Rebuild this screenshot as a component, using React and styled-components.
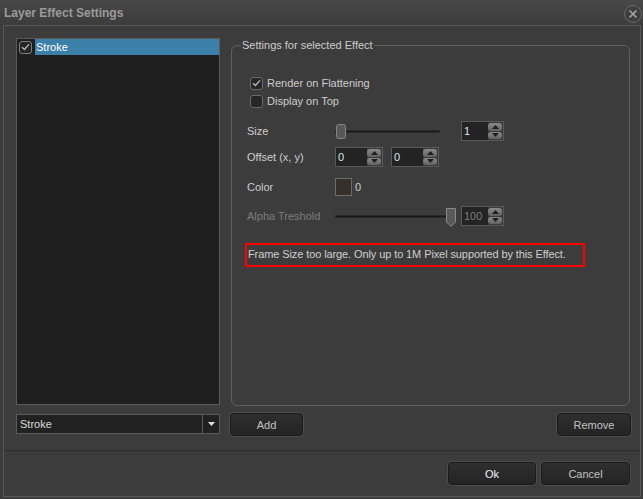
import React from "react";
import styled, { createGlobalStyle } from "styled-components";

const GlobalStyle = createGlobalStyle`
  html, body {
    margin: 0;
    padding: 0;
    background: #3c3c3c;
  }
  body {
    font-family: "Liberation Sans", Arial, sans-serif;
    font-size: 11px;
  }
`;

const Window = styled.div`
  width: 643px;
  height: 499px;
  display: flex;
  flex-direction: column;
  background: #3c3c3c;
  color: #cdcdcd;
  overflow: hidden;
`;

const TitleBar = styled.div`
  height: 25px;
  flex: none;
  display: flex;
  align-items: center;
  justify-content: space-between;
  padding-left: 4px;
  background: linear-gradient(#484848, #3c3c3c);
`;

const Title = styled.div`
  font-weight: bold;
  font-size: 12px;
  color: #9a9a9a;
`;

const CloseButton = styled.div`
  width: 16px;
  height: 16px;
  margin-right: 1px;
  margin-top: 3px;
  border-radius: 50%;
  border: 1px solid #6a6a6a;
  background: #3e3e3e;
  display: flex;
  align-items: center;
  justify-content: center;
`;

const Frame = styled.div`
  flex: 1;
  display: flex;
  flex-direction: column;
  margin: 0 2px 2px 3px;
  border: 1px solid #575757;
`;

const Body = styled.div`
  height: 398px;
  flex: none;
  display: flex;
  gap: 10px;
  padding: 12px 9px 14px 12px;
  border-bottom: 1px solid #2c2c2c;
`;

const LeftColumn = styled.div`
  width: 204px;
  display: flex;
  flex-direction: column;
  gap: 9px;
  padding-bottom: 2px;
`;

const EffectList = styled.div`
  flex: 1;
  background: #1f1f1f;
  border: 1px solid #5a5a5a;
`;

const ListItem = styled.div`
  height: 16px;
  display: flex;
  align-items: center;
  gap: 3px;
  padding-left: 2px;
`;

const ItemLabel = styled.div`
  flex: 1;
  height: 16px;
  line-height: 16px;
  padding-left: 1px;
  background: ${(p) => (p.$selected ? "#3a80a9" : "transparent")};
  color: ${(p) => (p.$selected ? "#ffffff" : "#d2d2d2")};
`;

const CheckBox = styled.div`
  width: 11px;
  height: 11px;
  flex: none;
  border: 1px solid ${(p) => p.$border || "#6a6a6a"};
  border-radius: 3px;
  background: #262626;
  display: flex;
  align-items: center;
  justify-content: center;
`;

const Combo = styled.div`
  height: 18px;
  display: flex;
  background: #212121;
  border: 1px solid #5a5a5a;
`;

const ComboText = styled.div`
  flex: 1;
  line-height: 18px;
  padding-left: 3px;
  color: #dcdcdc;
`;

const ComboArrow = styled.div`
  width: 16px;
  border-left: 1px solid #5a5a5a;
  display: flex;
  align-items: center;
  justify-content: center;
`;

const RightColumn = styled.div`
  flex: 1;
  display: flex;
  flex-direction: column;
`;

const GroupBox = styled.fieldset`
  flex: 1;
  min-width: 0;
  margin: 0 1px;
  padding: 22px 0 0 15px;
  border: 1px solid #5e5e5e;
  border-radius: 6px;
  display: flex;
  flex-direction: column;
`;

const GroupTitle = styled.legend`
  margin-left: -6px;
  padding: 0 1px;
  color: #cdcdcd;
  font-size: 11px;
  line-height: 14px;
`;

const CheckRow = styled.div`
  height: 18px;
  display: flex;
  align-items: center;
  gap: 4px;
  padding-left: 3px;
`;

const FieldRow = styled.div`
  height: 20px;
  display: flex;
  align-items: center;
  margin-top: ${(p) => p.$top}px;
`;

const FieldLabel = styled.div`
  width: 88px;
  flex: none;
  color: ${(p) => (p.$disabled ? "#7c7c7c" : "#cdcdcd")};
`;

const SliderTrack = styled.div`
  position: relative;
  width: ${(p) => p.$width}px;
  height: 3px;
  margin-right: ${(p) => p.$gap}px;
  background: #1a1a1a;
  border: 1px solid #2a2a2a;
  box-sizing: border-box;
`;

const SliderThumb = styled.div`
  position: absolute;
  top: ${(p) => p.$top}px;
  width: 10px;
  display: flex;
`;

const Spin = styled.div`
  width: ${(p) => p.$width}px;
  height: 20px;
  box-sizing: border-box;
  display: flex;
  border: 1px solid #5a5a5a;
  background: #232323;
  margin-right: ${(p) => p.$gap || 0}px;
`;

const SpinValue = styled.div`
  flex: 1;
  line-height: 18px;
  padding-left: 2px;
  color: ${(p) => (p.$disabled ? "#7c7c7c" : "#dde3ea")};
`;

const SpinButtons = styled.div`
  width: 14px;
  display: flex;
  flex-direction: column;
  justify-content: center;
  gap: 1px;
  padding: 1px 1px 1px 0;
  background: #3a3a3a;
`;

const SpinArrow = styled.div`
  flex: 1;
  border-radius: 3px;
  background: linear-gradient(#8a8a8a, #626262);
  display: flex;
  align-items: center;
  justify-content: center;
`;

const Swatch = styled.div`
  width: 15px;
  height: 16px;
  border: 1px solid #6c6c6c;
  background: #342f29;
  margin-right: 3px;
`;

const Message = styled.div`
  width: 335px;
  height: 20px;
  margin: 17px 0 0 -2px;
  padding-left: 1px;
  border: 2px solid #ff0000;
  line-height: 19px;
  letter-spacing: -0.1px;
  color: #cfcfcf;
`;

const ButtonRow = styled.div`
  display: flex;
  justify-content: space-between;
  margin-top: ${(p) => p.$top || 0}px;
`;

const Button = styled.button`
  width: ${(p) => p.$width}px;
  height: 23px;
  padding: 0;
  border-radius: 4px;
  border: 1px solid #1b1b1b;
  box-shadow: 0 0 0 1px #4c4c4c;
  background: linear-gradient(#2e2e2e, #252525);
  color: ${(p) => (p.$primary ? "#f4f4f4" : "#c2c2c2")};
  font-family: "Liberation Sans", Arial, sans-serif;
  font-size: 11px;
`;

const Footer = styled.div`
  flex: 1;
  display: flex;
  justify-content: flex-end;
  align-items: flex-start;
  gap: 5px;
  padding: 11px 10px 0 0;
`;

const Check = () => (
  <svg width="9" height="8" viewBox="0 0 9 8">
    <path d="M1 4.2 L3.4 6.4 L8 1.4" fill="none" stroke="#b8b8b8" strokeWidth="1.4" />
  </svg>
);

const Triangle = ({ up }) => (
  <svg width="7" height="4" viewBox="0 0 7 4">
    <path d={up ? "M0 4 L3.5 0 L7 4 Z" : "M0 0 L7 0 L3.5 4 Z"} fill="#1e1e1e" />
  </svg>
);

const SpinBox = ({ value, width, gap, disabled }) => (
  <Spin $width={width} $gap={gap}>
    <SpinValue $disabled={disabled}>{value}</SpinValue>
    <SpinButtons>
      <SpinArrow>
        <Triangle up />
      </SpinArrow>
      <SpinArrow>
        <Triangle />
      </SpinArrow>
    </SpinButtons>
  </Spin>
);

const Slider = ({ width, gap, ratio, pointed }) => (
  <SliderTrack $width={width} $gap={gap}>
    <SliderThumb $top={pointed ? -8 : -7} style={{ left: ratio * (width - 10) }}>
      {pointed ? (
        <svg width="10" height="19" viewBox="0 0 10 19">
          <path d="M0.5 0.5 H9.5 V14 L5 18.5 L0.5 14 Z" fill="#595959" stroke="#8a8a8a" />
        </svg>
      ) : (
        <svg width="10" height="15" viewBox="0 0 10 15">
          <rect x="0.5" y="0.5" width="9" height="14" rx="2" fill="#595959" stroke="#858585" />
        </svg>
      )}
    </SliderThumb>
  </SliderTrack>
);

export default function App() {
  return (
    <>
      <GlobalStyle />
      <Window>
        <TitleBar>
          <Title>Layer Effect Settings</Title>
          <CloseButton>
            <svg width="10" height="10" viewBox="0 0 10 10">
              <path d="M1.5 1.5 L8.5 8.5 M8.5 1.5 L1.5 8.5" stroke="#a6a6a6" strokeWidth="1.6" />
            </svg>
          </CloseButton>
        </TitleBar>
        <Frame>
          <Body>
            <LeftColumn>
              <EffectList>
                <ListItem>
                  <CheckBox $border="#7e7e7e">
                    <Check />
                  </CheckBox>
                  <ItemLabel $selected>Stroke</ItemLabel>
                </ListItem>
              </EffectList>
              <Combo>
                <ComboText>Stroke</ComboText>
                <ComboArrow>
                  <svg width="7" height="4" viewBox="0 0 7 4">
                    <path d="M0 0 L7 0 L3.5 4 Z" fill="#e0e0e0" />
                  </svg>
                </ComboArrow>
              </Combo>
            </LeftColumn>
            <RightColumn>
              <GroupBox>
                <GroupTitle>Settings for selected Effect</GroupTitle>
                <CheckRow>
                  <CheckBox>
                    <Check />
                  </CheckBox>
                  Render on Flattening
                </CheckRow>
                <CheckRow>
                  <CheckBox />
                  Display on Top
                </CheckRow>
                <FieldRow $top={11}>
                  <FieldLabel>Size</FieldLabel>
                  <Slider width={105} gap={21} ratio={0} />
                  <SpinBox value="1" width={43} />
                </FieldRow>
                <FieldRow $top={6}>
                  <FieldLabel>Offset (x, y)</FieldLabel>
                  <SpinBox value="0" width={48} gap={8} />
                  <SpinBox value="0" width={48} />
                </FieldRow>
                <FieldRow $top={10}>
                  <FieldLabel>Color</FieldLabel>
                  <Swatch />
                  0
                </FieldRow>
                <FieldRow $top={9}>
                  <FieldLabel $disabled>Alpha Treshold</FieldLabel>
                  <Slider width={120} gap={6} ratio={1} pointed />
                  <SpinBox value="100" width={43} disabled />
                </FieldRow>
                <Message>Frame Size too large. Only up to 1M Pixel supported by this Effect.</Message>
              </GroupBox>
              <ButtonRow $top={7}>
                <Button $width={73}>Add</Button>
                <Button $width={74}>Remove</Button>
              </ButtonRow>
            </RightColumn>
          </Body>
          <Footer>
            <Button $width={88} $primary>
              Ok
            </Button>
            <Button $width={89}>Cancel</Button>
          </Footer>
        </Frame>
      </Window>
    </>
  );
}
